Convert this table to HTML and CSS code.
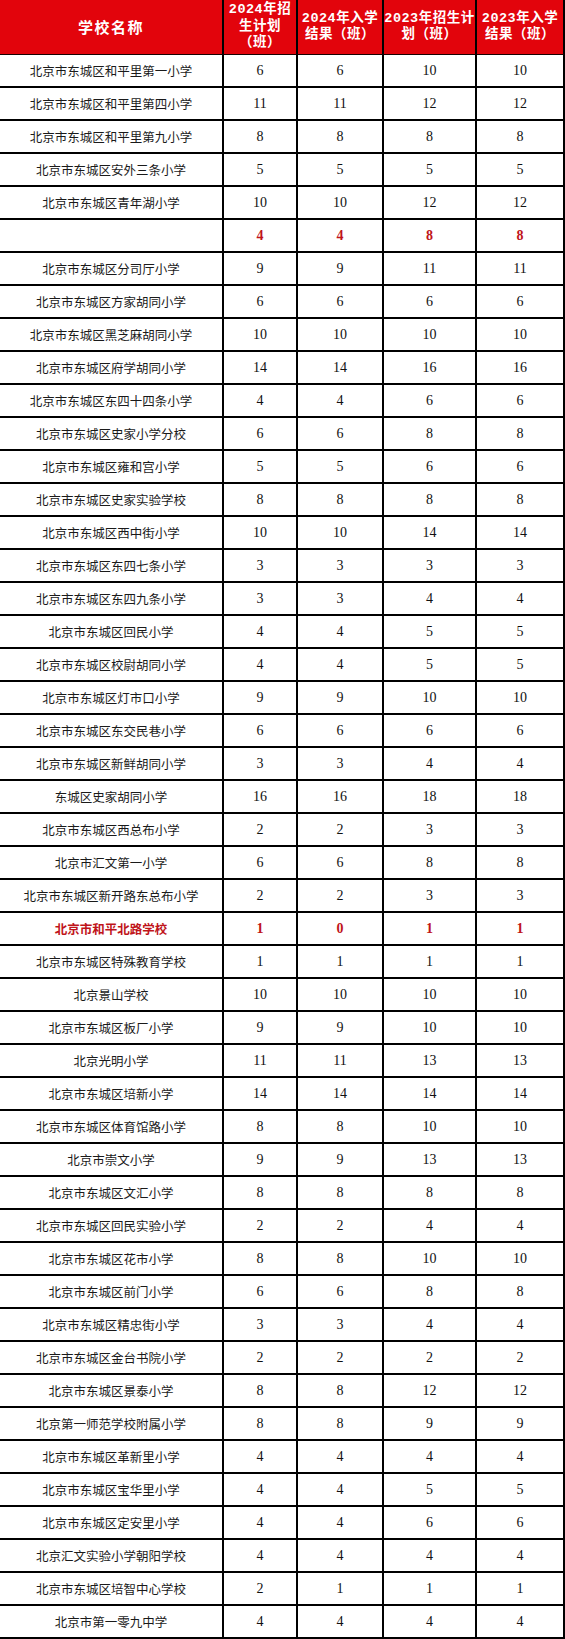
FILE: index.html
```html
<!DOCTYPE html>
<html lang="zh-CN">
<head>
<meta charset="utf-8">
<title>学校招生计划</title>
<link rel="stylesheet" href="styles.css">
</head>
<body>
<table class="plan">
  <colgroup>
    <col class="c-name">
    <col class="c-a">
    <col class="c-b">
    <col class="c-c">
    <col class="c-d">
  </colgroup>
  <thead>
    <tr class="head-row">
      <th class="h-name">学校名称</th>
      <th>2024年招<br>生计划<br>（班）</th>
      <th>2024年入学<br>结果（班）</th>
      <th>2023年招生计<br>划（班）</th>
      <th>2023年入学<br>结果（班）</th>
    </tr>
  </thead>
  <tbody>
    <tr><td class="name">北京市东城区和平里第一小学</td><td>6</td><td>6</td><td>10</td><td>10</td></tr>
    <tr><td class="name">北京市东城区和平里第四小学</td><td>11</td><td>11</td><td>12</td><td>12</td></tr>
    <tr><td class="name">北京市东城区和平里第九小学</td><td>8</td><td>8</td><td>8</td><td>8</td></tr>
    <tr><td class="name">北京市东城区安外三条小学</td><td>5</td><td>5</td><td>5</td><td>5</td></tr>
    <tr><td class="name">北京市东城区青年湖小学</td><td>10</td><td>10</td><td>12</td><td>12</td></tr>
    <tr class="hl"><td class="name"></td><td>4</td><td>4</td><td>8</td><td>8</td></tr>
    <tr><td class="name">北京市东城区分司厅小学</td><td>9</td><td>9</td><td>11</td><td>11</td></tr>
    <tr><td class="name">北京市东城区方家胡同小学</td><td>6</td><td>6</td><td>6</td><td>6</td></tr>
    <tr><td class="name">北京市东城区黑芝麻胡同小学</td><td>10</td><td>10</td><td>10</td><td>10</td></tr>
    <tr><td class="name">北京市东城区府学胡同小学</td><td>14</td><td>14</td><td>16</td><td>16</td></tr>
    <tr><td class="name">北京市东城区东四十四条小学</td><td>4</td><td>4</td><td>6</td><td>6</td></tr>
    <tr><td class="name">北京市东城区史家小学分校</td><td>6</td><td>6</td><td>8</td><td>8</td></tr>
    <tr><td class="name">北京市东城区雍和宫小学</td><td>5</td><td>5</td><td>6</td><td>6</td></tr>
    <tr><td class="name">北京市东城区史家实验学校</td><td>8</td><td>8</td><td>8</td><td>8</td></tr>
    <tr><td class="name">北京市东城区西中街小学</td><td>10</td><td>10</td><td>14</td><td>14</td></tr>
    <tr><td class="name">北京市东城区东四七条小学</td><td>3</td><td>3</td><td>3</td><td>3</td></tr>
    <tr><td class="name">北京市东城区东四九条小学</td><td>3</td><td>3</td><td>4</td><td>4</td></tr>
    <tr><td class="name">北京市东城区回民小学</td><td>4</td><td>4</td><td>5</td><td>5</td></tr>
    <tr><td class="name">北京市东城区校尉胡同小学</td><td>4</td><td>4</td><td>5</td><td>5</td></tr>
    <tr><td class="name">北京市东城区灯市口小学</td><td>9</td><td>9</td><td>10</td><td>10</td></tr>
    <tr><td class="name">北京市东城区东交民巷小学</td><td>6</td><td>6</td><td>6</td><td>6</td></tr>
    <tr><td class="name">北京市东城区新鲜胡同小学</td><td>3</td><td>3</td><td>4</td><td>4</td></tr>
    <tr><td class="name">东城区史家胡同小学</td><td>16</td><td>16</td><td>18</td><td>18</td></tr>
    <tr><td class="name">北京市东城区西总布小学</td><td>2</td><td>2</td><td>3</td><td>3</td></tr>
    <tr><td class="name">北京市汇文第一小学</td><td>6</td><td>6</td><td>8</td><td>8</td></tr>
    <tr><td class="name">北京市东城区新开路东总布小学</td><td>2</td><td>2</td><td>3</td><td>3</td></tr>
    <tr class="hl"><td class="name">北京市和平北路学校</td><td>1</td><td>0</td><td>1</td><td>1</td></tr>
    <tr><td class="name">北京市东城区特殊教育学校</td><td>1</td><td>1</td><td>1</td><td>1</td></tr>
    <tr><td class="name">北京景山学校</td><td>10</td><td>10</td><td>10</td><td>10</td></tr>
    <tr><td class="name">北京市东城区板厂小学</td><td>9</td><td>9</td><td>10</td><td>10</td></tr>
    <tr><td class="name">北京光明小学</td><td>11</td><td>11</td><td>13</td><td>13</td></tr>
    <tr><td class="name">北京市东城区培新小学</td><td>14</td><td>14</td><td>14</td><td>14</td></tr>
    <tr><td class="name">北京市东城区体育馆路小学</td><td>8</td><td>8</td><td>10</td><td>10</td></tr>
    <tr><td class="name">北京市崇文小学</td><td>9</td><td>9</td><td>13</td><td>13</td></tr>
    <tr><td class="name">北京市东城区文汇小学</td><td>8</td><td>8</td><td>8</td><td>8</td></tr>
    <tr><td class="name">北京市东城区回民实验小学</td><td>2</td><td>2</td><td>4</td><td>4</td></tr>
    <tr><td class="name">北京市东城区花市小学</td><td>8</td><td>8</td><td>10</td><td>10</td></tr>
    <tr><td class="name">北京市东城区前门小学</td><td>6</td><td>6</td><td>8</td><td>8</td></tr>
    <tr><td class="name">北京市东城区精忠街小学</td><td>3</td><td>3</td><td>4</td><td>4</td></tr>
    <tr><td class="name">北京市东城区金台书院小学</td><td>2</td><td>2</td><td>2</td><td>2</td></tr>
    <tr><td class="name">北京市东城区景泰小学</td><td>8</td><td>8</td><td>12</td><td>12</td></tr>
    <tr><td class="name">北京第一师范学校附属小学</td><td>8</td><td>8</td><td>9</td><td>9</td></tr>
    <tr><td class="name">北京市东城区革新里小学</td><td>4</td><td>4</td><td>4</td><td>4</td></tr>
    <tr><td class="name">北京市东城区宝华里小学</td><td>4</td><td>4</td><td>5</td><td>5</td></tr>
    <tr><td class="name">北京市东城区定安里小学</td><td>4</td><td>4</td><td>6</td><td>6</td></tr>
    <tr><td class="name">北京汇文实验小学朝阳学校</td><td>4</td><td>4</td><td>4</td><td>4</td></tr>
    <tr><td class="name">北京市东城区培智中心学校</td><td>2</td><td>1</td><td>1</td><td>1</td></tr>
    <tr><td class="name">北京市第一零九中学</td><td>4</td><td>4</td><td>4</td><td>4</td></tr>
  </tbody>
</table>
</body>
</html>
```
FILE: styles.css
```css
html, body {
  margin: 0;
  padding: 0;
  background: #ffffff;
}

.plan {
  width: 565px;
  table-layout: fixed;
  border-collapse: separate;
  border-spacing: 0;
}

.c-name { width: 224px; }
.c-a { width: 74px; }
.c-b { width: 86px; }
.c-c { width: 93px; }
.c-d { width: 88px; }

.plan th,
.plan td {
  box-sizing: border-box;
  padding: 0;
  text-align: center;
  vertical-align: middle;
  border-right: 2px solid #000;
  border-bottom: 2px solid #000;
  white-space: nowrap;
}

.head-row {
  height: 55px;
}

.plan th {
  background: #e2040c;
  color: #ffffff;
  font-family: "Liberation Mono", "Noto Sans CJK SC", monospace;
  font-weight: bold;
  font-size: 13.5px;
  line-height: 16.5px;
  letter-spacing: 0.5px;
  border-bottom: 1px solid #1a0000;
}

.plan th.h-name {
  font-family: "Noto Sans CJK SC", sans-serif;
  font-size: 15px;
  letter-spacing: 1.5px;
}

.plan tbody tr {
  height: 33px;
}

.plan td {
  font-family: "Liberation Serif", "Noto Sans CJK SC", serif;
  font-size: 14px;
  line-height: 16px;
  color: #111;
}

.plan td.name {
  font-family: "Noto Sans CJK SC", sans-serif;
  font-size: 12.5px;
  color: #1a1a1a;
}

.plan tr.hl td {
  color: #c0141a;
  font-weight: bold;
}
```
